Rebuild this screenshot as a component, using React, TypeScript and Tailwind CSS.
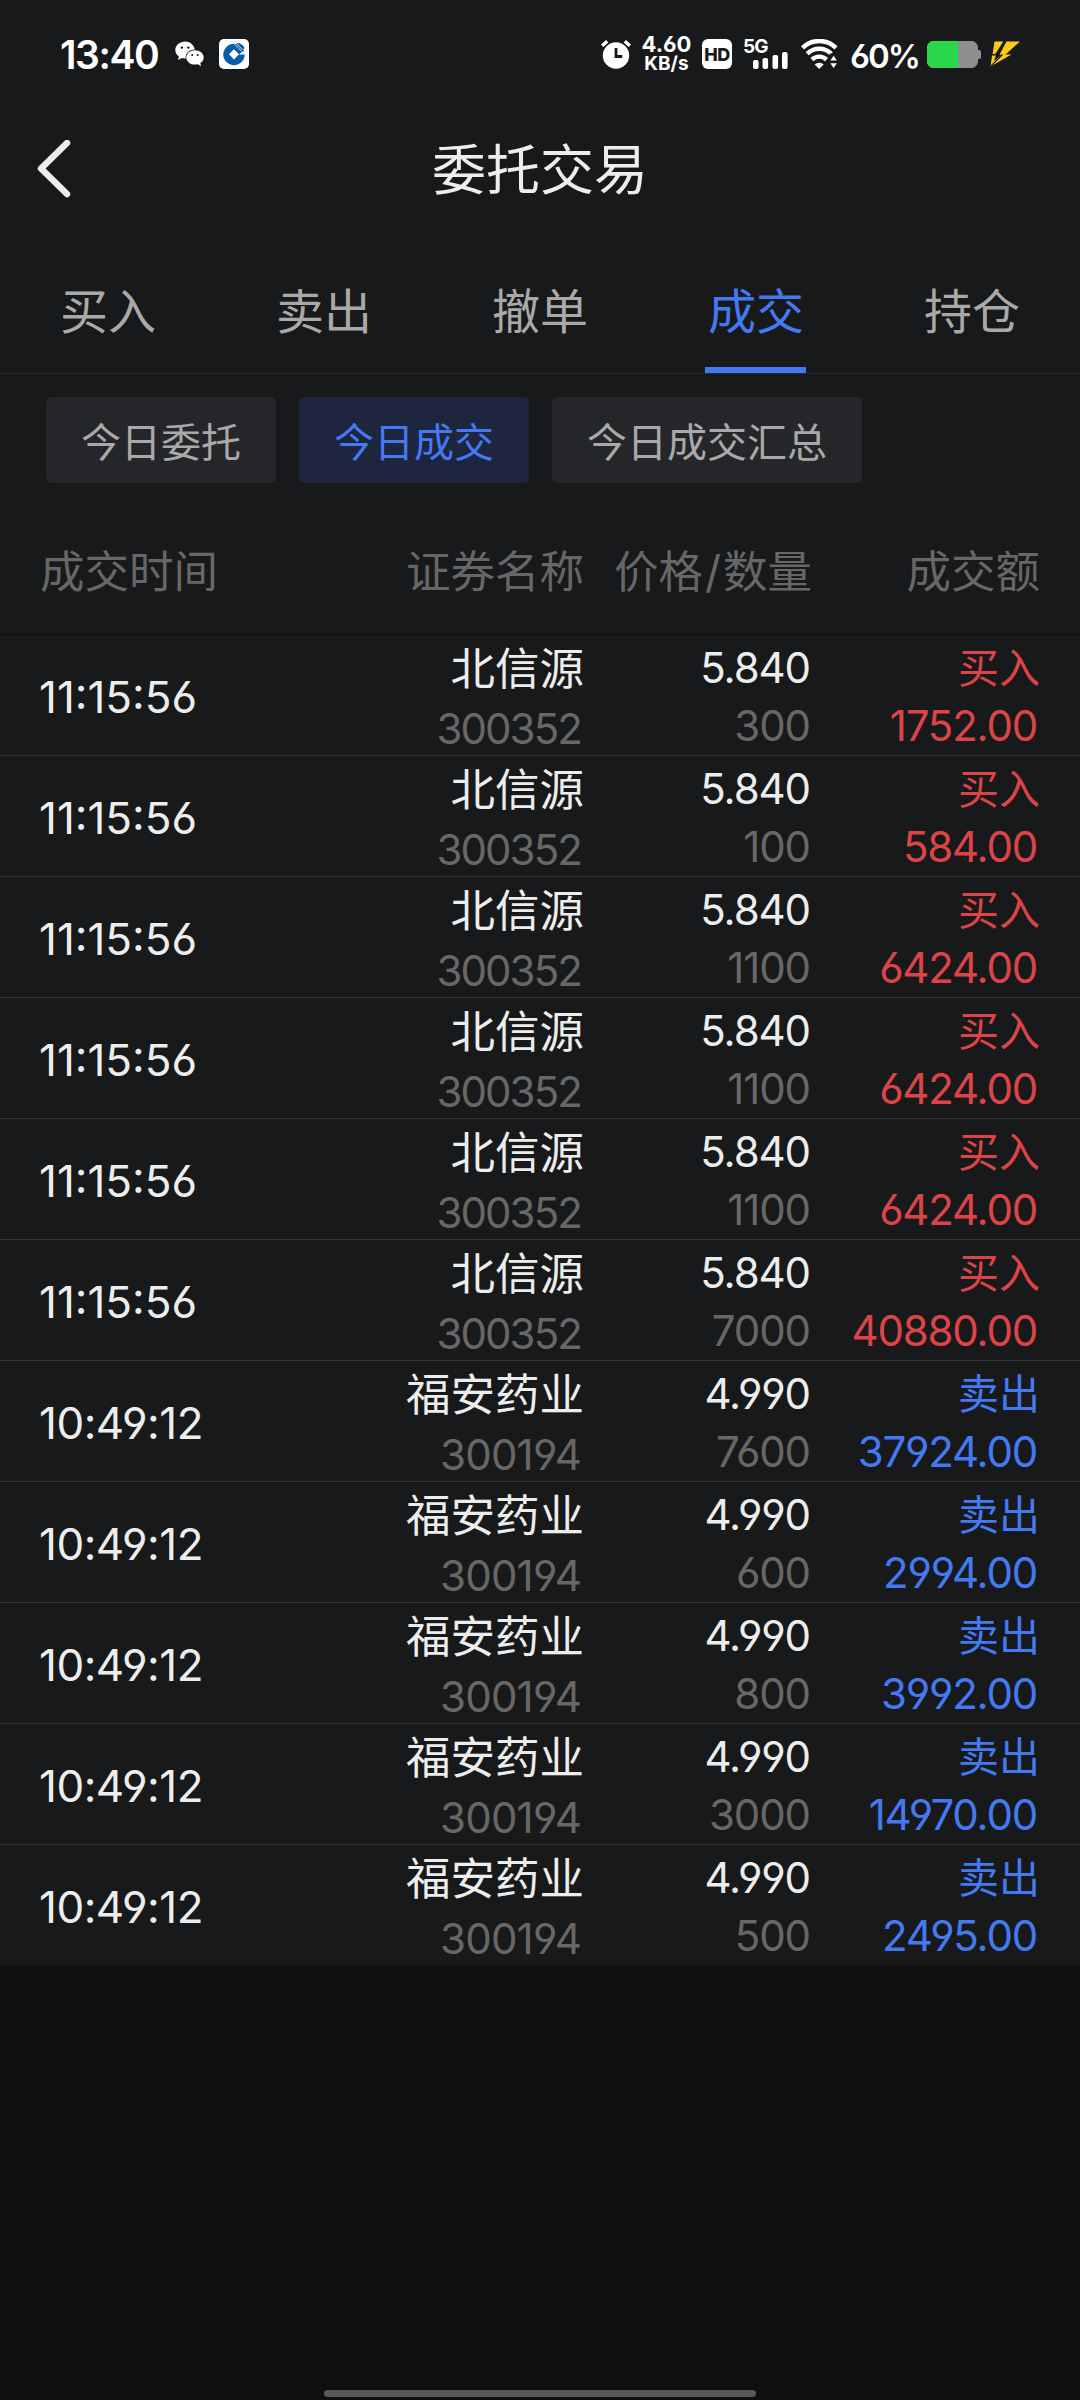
import React from 'react';

interface Trade {
  time: string;
  name: string;
  code: string;
  price: string;
  amount: string;
  side: 'buy' | 'sell';
  total: string;
}

const buy = (amount: string, total: string): Trade => ({
  time: '11:15:56',
  name: '北信源',
  code: '300352',
  price: '5.840',
  side: 'buy',
  amount,
  total,
});

const sell = (amount: string, total: string): Trade => ({
  time: '10:49:12',
  name: '福安药业',
  code: '300194',
  price: '4.990',
  side: 'sell',
  amount,
  total,
});

const trades: Trade[] = [
  buy('300', '1752.00'),
  buy('100', '584.00'),
  buy('1100', '6424.00'),
  buy('1100', '6424.00'),
  buy('1100', '6424.00'),
  buy('7000', '40880.00'),
  sell('7600', '37924.00'),
  sell('600', '2994.00'),
  sell('800', '3992.00'),
  sell('3000', '14970.00'),
  sell('500', '2495.00'),
];

const tabs = ['买入', '卖出', '撤单', '成交', '持仓'];
const filters = ['今日委托', '今日成交', '今日成交汇总'];

function WeChatIcon() {
  return (
    <svg className="ml-[17px] h-[26px] w-[29px]" viewBox="0 0 29 26">
      <path
        fill="#fff"
        d="M10.2 0.5C4.7 0.5 0.3 4.3 0.3 9c0 2.7 1.4 5 3.6 6.6L3 19l3.7-2c1.1.3 2.3.5 3.5.5h.6c-.9-5 3.6-9.300 9-9.100C18.900 3.900 15 .5 10.200.5z"
      />
      <path
        fill="#fff"
        d="M20 9.200c-4.900 0-8.700 3.200-8.700 7.200s3.900 7.200 8.700 7.200c1 0 2-.2 2.900-.4l3.100 2-.7-3.100c2-1.400 3.400-3.400 3.400-5.700 0-4-3.900-7.200-8.700-7.200z"
      />
      <g fill="#17191a">
        <circle cx="6.900" cy="6.600" r="1.200" />
        <circle cx="13.400" cy="6.600" r="1.200" />
        <circle cx="17.200" cy="14" r="1" />
        <circle cx="22.700" cy="14" r="1" />
      </g>
    </svg>
  );
}

function BankIcon() {
  return (
    <svg className="ml-[15px] h-[30px] w-[30px]" viewBox="0 0 30 30">
      <rect width="30" height="30" rx="5" fill="#fff" />
      {/* Ring with a square hole, open on the right */}
      <circle cx="15" cy="15.500" r="10.700" fill="#0a5ba8" />
      <path fill="#fff" d="M15 10.200l5 5.100-5 5.100-5-5.100z" />
      <path fill="#fff" d="M20 15.500l3.500-3.200H27v3.200z" />
      <path fill="#0a5ba8" d="M17 4.200h3.500c2 .7 3.800 2.400 5 4.700l-3 3.600z" />
      <path fill="none" stroke="#fff" strokeWidth="0.800" d="M15.500 5l6.700 7M17.500 4.500l6 6.300" />
    </svg>
  );
}

function AlarmIcon() {
  return (
    <svg className="h-[30px] w-[30px]" viewBox="0 0 30 30">
      <circle cx="15" cy="16.500" r="13.200" fill="#fff" />
      <path stroke="#fff" strokeWidth="3.400" d="M1.200 6.800l5-4.600M28.800 6.800l-5-4.600" />
      <path fill="none" stroke="#17191a" strokeWidth="2.800" d="M15 9v8.500h6.200" />
    </svg>
  );
}

function SignalIcon() {
  return (
    <svg className="h-[17px] w-[36px]" viewBox="0 0 36 17" fill="#fff">
      <rect x="1" y="8" width="5.600" height="9" rx="2" />
      <rect x="10.500" y="6" width="5.600" height="11" rx="2" />
      <rect x="20.500" y="3" width="5.600" height="14" rx="2" />
      <rect x="30" y="0" width="5.600" height="17" rx="2" />
    </svg>
  );
}

function WifiIcon() {
  return (
    <svg className="ml-[13px] h-[30px] w-[37px]" viewBox="0 0 37 30">
      <g fill="none" stroke="#fff" strokeWidth="4.400">
        <path d="M1.500 8.800a24 24 0 0 1 33.500 0" />
        <path d="M6.200 14.800a17 17 0 0 1 24.100 0" />
        <path d="M11 20.600a10.400 10.400 0 0 1 14.500 0" />
      </g>
      <path fill="#fff" d="M13.700 25.500a6.500 6.500 0 0 1 9 0l-4.500 4.400z" />
      <path fill="#17191a" d="M28.500 14.500h9v16h-9z" />
      <path fill="#fff" d="M29.300 21.500l3.300-4.800 3.300 4.800zM29.300 24.200h6.600L32.600 29z" />
    </svg>
  );
}

function BatteryIcon() {
  return (
    <svg className="ml-[10px] h-[27px] w-[54px]" viewBox="0 0 54 27">
      <rect width="51" height="27" rx="6.500" fill="#8e8f91" />
      <rect x="49" y="9" width="5" height="9" rx="2" fill="#8e8f91" />
      <path fill="#2ad84b" d="M6.500 0H31v27H6.500A6.500 6.500 0 0 1 0 20.500v-14A6.500 6.500 0 0 1 6.500 0z" />
    </svg>
  );
}

function BoltIcon() {
  return (
    <svg className="ml-[9px] h-[26px] w-[30px]" viewBox="0 0 30 26" fill="#fbcb15">
      <path d="M4.500 0.500h8.800L5.300 13H2.600zM16.500 0.500H30L15.500 13.500h6L0.500 25.500 2 14.500h4L4 20l8-6.200H9.500z" />
      <path stroke="#17191a" strokeWidth="1.100" d="M1 25L12.500 13.500" />
    </svg>
  );
}

function StatusBar() {
  return (
    <div className="flex h-[108px] items-center justify-between pl-[60px] pr-[60px] text-white">
      <div className="flex items-center">
        <span className="w-[98px] whitespace-nowrap text-[39px] font-semibold leading-none tracking-[-1.4px]">
          13:40
        </span>
        <WeChatIcon />
        <BankIcon />
      </div>
      <div className="flex items-center">
        <AlarmIcon />
        <div className="ml-[10px] flex w-[51px] flex-col items-center font-bold">
          <span className="text-[22px] leading-[19px]">4.60</span>
          <span className="text-[19px] leading-[19px]">KB/s</span>
        </div>
        <div className="ml-[10px] flex h-[30px] w-[30px] items-center justify-center rounded-[6px] bg-white text-[18px] font-extrabold tracking-[-0.5px] text-[#17191a]">
          HD
        </div>
        <div className="ml-[11px] flex h-[30px] w-[45px] flex-col">
          <span className="h-[13px] text-[19px] font-bold leading-[16px] tracking-[-1px]">5G</span>
          <div className="flex justify-end">
            <SignalIcon />
          </div>
        </div>
        <WifiIcon />
        <span className="ml-[12px] w-[67px] whitespace-nowrap pt-[5px] text-[33px] font-semibold leading-none tracking-[-2px]">
          60%
        </span>
        <BatteryIcon />
        <BoltIcon />
      </div>
    </div>
  );
}

function Header() {
  return (
    <div className="flex h-[124px] items-center px-[36px] text-[#ededed]">
      <svg className="h-[60px] w-[36px]" viewBox="0 0 36 60" fill="none">
        <path
          d="M31 3L5 28.500 31 54"
          stroke="currentColor"
          strokeWidth="6.500"
          strokeLinecap="round"
          strokeLinejoin="round"
        />
      </svg>
      <h1 className="flex-1 pt-[2px] text-center text-[54px] leading-none">委托交易</h1>
      <div className="w-[36px]" />
    </div>
  );
}

function Tabs({ active }: { active: string }) {
  return (
    <div className="flex h-[142px] border-b border-[#27292b]">
      {tabs.map((tab) => (
        <button key={tab} className="flex flex-1 flex-col items-center text-[48px]">
          <span
            className={
              tab === active
                ? 'h-[135px] pt-[25px] leading-[110px] text-[#4479f2]'
                : 'h-[135px] pt-[25px] leading-[110px] text-[#a9a9a9]'
            }
          >
            {tab}
          </span>
          {tab === active && <span className="mr-[2px] h-[6px] w-[101px] bg-[#4479f2]" />}
        </button>
      ))}
    </div>
  );
}

function Filters({ active }: { active: string }) {
  return (
    <div className="flex gap-[23px] px-[46px] pt-[23px]">
      {filters.map((filter) => (
        <button
          key={filter}
          className={
            filter === active
              ? 'h-[86px] rounded-[5px] bg-[#1d263e] px-[35px] pt-[5px] text-[40px] leading-[81px] text-[#4479f2]'
              : 'h-[86px] rounded-[5px] bg-[#252629] px-[35px] pt-[5px] text-[40px] leading-[81px] text-[#a9a9a9]'
          }
        >
          {filter}
        </button>
      ))}
    </div>
  );
}

function TradeRow({ trade }: { trade: Trade }) {
  const isBuy = trade.side === 'buy';

  return (
    <div className="flex h-[121px] border-b border-[#333436] pl-[39px] pr-[40px] text-[42px] text-[#ededed] last:h-[120px] last:border-b-0">
      <div
        className={
          isBuy
            ? 'w-[317px] pt-[3px] text-[44px] leading-[118px]'
            : 'w-[317px] pt-[3px] text-[44px] leading-[118px] tracking-[-0.5px]'
        }
      >
        {trade.time}
      </div>
      <div className="flex w-[228px] flex-col text-right">
        <span className="text-[44.5px] leading-[68px]">{trade.name}</span>
        <span
          className={
            isBuy
              ? 'pr-[3px] leading-[51px] tracking-[-1.9px] text-[#676767]'
              : 'pr-[3px] leading-[51px] tracking-[-0.8px] text-[#676767]'
          }
        >
          {trade.code}
        </span>
      </div>
      <div className="flex w-[228px] flex-col pr-[2px] text-right tracking-[-1.1px]">
        <span className="leading-[66px]">{trade.price}</span>
        <span className="leading-[50px] text-[#676767]">{trade.amount}</span>
      </div>
      <div
        className={
          isBuy
            ? 'flex w-[228px] flex-col text-right text-[#dc4448]'
            : 'flex w-[228px] flex-col text-right text-[#4479f2]'
        }
      >
        <span className="text-[41px] leading-[67px]">{isBuy ? '买入' : '卖出'}</span>
        <span className="pr-[3px] leading-[47px] tracking-[-1.2px]">{trade.total}</span>
      </div>
    </div>
  );
}

export default function App() {
  return (
    <div className="flex h-[2400px] w-[1080px] flex-col overflow-hidden bg-[#0f1011] font-['Inter','Noto_Sans_CJK_SC',sans-serif] [font-feature-settings:'cv03','cv04']">
      <div className="bg-[#17191a]">
        <StatusBar />
        <Header />
        <Tabs active="成交" />
        <Filters active="今日成交" />

        {/* Column titles */}
        <div className="flex h-[152px] border-b border-[#0f1011] px-[40px] pt-[27px] text-[44.5px] leading-[124px] text-[#676767]">
          <div className="w-[316px]">成交时间</div>
          <div className="w-[228px] text-right">证券名称</div>
          <div className="w-[228px] text-right">
            价格<span className="mx-[2px]">/</span>数量
          </div>
          <div className="w-[228px] text-right">成交额</div>
        </div>

        {trades.map((trade, i) => (
          <TradeRow key={i} trade={trade} />
        ))}
      </div>

      {/* Home indicator */}
      <div className="mx-auto mb-[3px] mt-auto h-[7px] w-[432px] rounded-full bg-[#57585a]" />
    </div>
  );
}
